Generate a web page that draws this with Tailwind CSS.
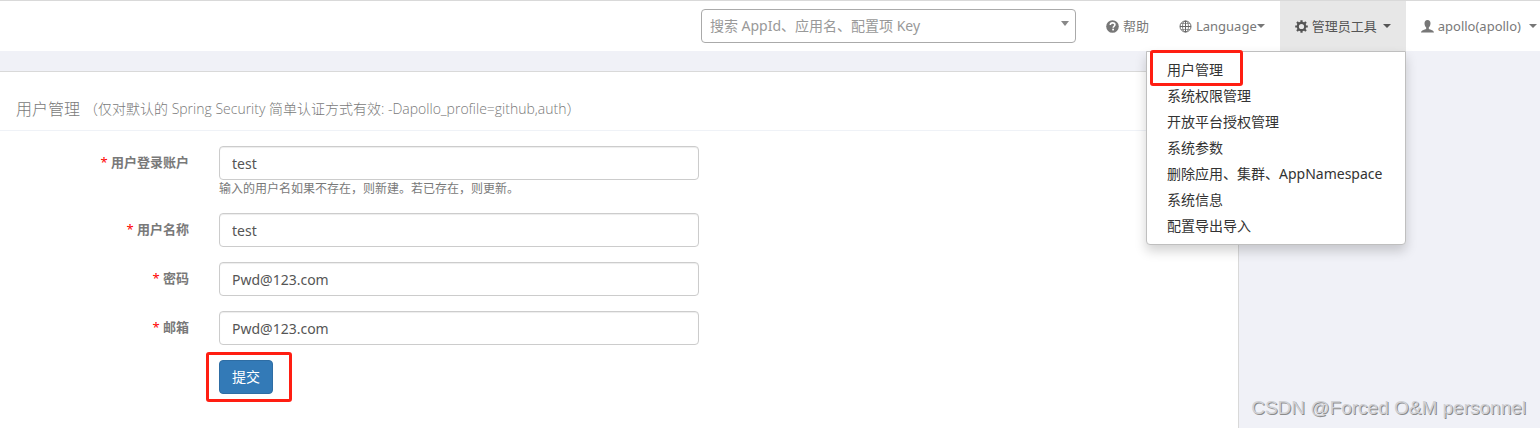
<!DOCTYPE html>
<html lang="zh-CN">
  <head>
    <meta charset="UTF-8" />
    <meta name="viewport" content="width=device-width, initial-scale=1.0" />
    <title>用户管理</title>
    <script src="https://cdn.jsdelivr.net/npm/@tailwindcss/browser@4"></script>
  </head>
  <body
    class="relative flex flex-col min-h-screen overflow-x-hidden bg-[#f0f1f7] text-[#797979] text-sm font-['Noto_Sans','Noto_Sans_CJK_SC',sans-serif]"
  >
    <!-- Navbar -->
    <header
      class="flex justify-end h-[51px] shrink-0 bg-white border-t border-[#d9d9d9] text-[13px] whitespace-nowrap"
    >
      <div class="relative w-[375px] my-2 mr-[15px]">
        <select
          aria-label="搜索"
          class="appearance-none w-full h-[34px] px-2 rounded border border-[#aaa] bg-white text-sm text-[#999]"
        >
          <option>搜索 AppId、应用名、配置项 Key</option>
        </select>
        <span
          class="absolute right-[7px] top-3 border-x-4 border-t-5 border-x-transparent border-t-[#888] pointer-events-none"
        ></span>
      </div>
      <nav class="flex">
        <a href="#" class="flex items-center gap-1 px-[15px]">
          <svg class="size-[13px]" viewBox="0 0 13 13">
            <circle cx="6.5" cy="6.5" r="6.3" fill="#777" />
            <path
              d="M4.3 5.1c0-1.5 1-2.2 2.3-2.2s2.3.7 2.3 1.9c0 1.4-1.7 1.5-1.7 2.9"
              fill="none"
              stroke="#fff"
              stroke-width="1.6"
            />
            <rect x="6.2" y="8.7" width="1.8" height="1.7" fill="#fff" />
          </svg>
          帮助
        </a>
        <a href="#" class="flex items-center px-[15px]">
          <svg
            class="size-[13px] mr-1"
            viewBox="0 0 13 13"
            fill="none"
            stroke="#666"
          >
            <circle cx="6.5" cy="6.5" r="5.5" />
            <ellipse cx="6.5" cy="6.5" rx="3" ry="5.5" stroke-width=".8" />
            <path d="M6.5 1v11M1 6.500h11" />
            <path d="M2.200 3.500h8.600M2.200 9.500h8.600" stroke-width=".6" />
          </svg>
          Language
          <span
            class="border-x-4 border-t-4 border-x-transparent border-t-[#777]"
          ></span>
        </a>
        <a href="#" class="flex items-center px-[15px] bg-[#e7e7e7] text-[#555]">
          <svg
            class="size-[13px] mr-1"
            viewBox="0 0 13 13"
            fill="none"
            stroke="#555"
          >
            <circle cx="6.5" cy="6.5" r="3.7" stroke-width="2.2" />
            <path
              d="M6.5 .2v2.300M6.500 10.500v2.300M.2 6.500h2.300M10.500 6.500h2.300M2 2l1.700 1.700M9.300 9.300l1.700 1.700M2 11l1.700-1.700M9.300 3.700l1.700-1.700"
              stroke-width="2.2"
            />
          </svg>
          管理员工具
          <span
            class="ml-[6px] border-x-4 border-t-4 border-x-transparent border-t-[#555]"
          ></span>
        </a>
        <a href="#" class="flex items-center pl-[15px] pr-[3px]">
          <svg class="size-[13px] mr-1" viewBox="0 0 13 13" fill="#777">
            <path
              d="M6.5 0c-2 0-3 1.400-3 3.300 0 1.800.7 3.300 1.700 4.300v1.100C3.800 9.800 0 10.100 0 12.600h13c0-2.500-3.800-2.800-5.200-3.900V7.600c1-1 1.700-2.500 1.700-4.300 0-1.900-1-3.300-3-3.300z"
            />
          </svg>
          apollo(apollo)
          <span
            class="ml-2 border-x-4 border-t-4 border-x-transparent border-t-[#777]"
          ></span>
        </a>
      </nav>
    </header>

    <!-- Admin dropdown -->
    <ul
      class="absolute z-10 right-[134px] top-[51px] w-[260px] py-[5px] bg-white border border-[#bfbfbf] rounded-b text-[#333] leading-[26px] shadow-[0_6px_12px_rgba(0,0,0,0.18)]"
    >
      <li class="relative px-5">
        <a href="#">用户管理</a>
        <span
          class="absolute left-[3px] -top-[7px] w-[93px] h-9 border-3 border-[#ff1e12] rounded-[3px] pointer-events-none"
        ></span>
      </li>
      <li class="px-5"><a href="#">系统权限管理</a></li>
      <li class="px-5"><a href="#">开放平台授权管理</a></li>
      <li class="px-5"><a href="#">系统参数</a></li>
      <li class="px-5 whitespace-nowrap">
        <a href="#">删除应用、集群、AppNamespace</a>
      </li>
      <li class="px-5"><a href="#">系统信息</a></li>
      <li class="px-5"><a href="#">配置导出导入</a></li>
    </ul>

    <!-- User panel -->
    <main
      class="grow w-[80.45%] mt-5 bg-white border-t border-r border-[#d9d9d9]"
    >
      <h1
        class="flex items-center h-[59px] pt-4 pl-4 border-b border-[#eff2f7] text-base font-light font-['Open_Sans','Noto_Sans_CJK_SC',sans-serif]"
      >
        用户管理
        <small class="ml-1 text-sm">
          （仅对默认的 Spring Security 简单认证方式有效:
          -Dapollo_profile=github,auth）
        </small>
      </h1>
      <form class="flex flex-col gap-[15px] pt-[15px] mr-[14px]">
        <div class="flex">
          <label
            for="username"
            class="w-1/6 pr-[15px] pt-[7px] text-right text-[13px] leading-[19px] font-bold"
            ><span class="text-[#f00] font-normal">*</span> 用户登录账户</label
          >
          <div class="w-5/12 px-[15px]">
            <input
              id="username"
              type="text"
              value="test"
              class="block w-full h-[34px] px-3 rounded border border-[#ccc] text-[#555] shadow-[inset_0_1px_1px_rgba(0,0,0,0.075)]"
            />
            <small class="block text-xs leading-[18px]"
              >输入的用户名如果不存在，则新建。若已存在，则更新。</small
            >
          </div>
        </div>
        <div class="flex">
          <label
            for="display-name"
            class="w-1/6 pr-[15px] pt-[7px] text-right text-[13px] leading-[19px] font-bold"
            ><span class="text-[#f00] font-normal">*</span> 用户名称</label
          >
          <div class="w-5/12 px-[15px]">
            <input
              id="display-name"
              type="text"
              value="test"
              class="block w-full h-[34px] px-3 rounded border border-[#ccc] text-[#555] shadow-[inset_0_1px_1px_rgba(0,0,0,0.075)]"
            />
          </div>
        </div>
        <div class="flex">
          <label
            for="password"
            class="w-1/6 pr-[15px] pt-[7px] text-right text-[13px] leading-[19px] font-bold"
            ><span class="text-[#f00] font-normal">*</span> 密码</label
          >
          <div class="w-5/12 px-[15px]">
            <input
              id="password"
              type="text"
              value="Pwd@123.com"
              class="block w-full h-[34px] px-3 rounded border border-[#ccc] text-[#555] shadow-[inset_0_1px_1px_rgba(0,0,0,0.075)]"
            />
          </div>
        </div>
        <div class="flex">
          <label
            for="email"
            class="w-1/6 pr-[15px] pt-[7px] text-right text-[13px] leading-[19px] font-bold"
            ><span class="text-[#f00] font-normal">*</span> 邮箱</label
          >
          <div class="w-5/12 px-[15px]">
            <input
              id="email"
              type="text"
              value="Pwd@123.com"
              class="block w-full h-[34px] px-3 rounded border border-[#ccc] text-[#555] shadow-[inset_0_1px_1px_rgba(0,0,0,0.075)]"
            />
          </div>
        </div>
        <div class="flex">
          <div class="w-1/6"></div>
          <div class="relative px-[15px]">
            <button
              type="submit"
              class="block h-[34px] px-3 rounded border border-[#2e6da4] bg-[#337ab7] text-white"
            >
              提交
            </button>
            <span
              class="absolute left-0.5 -top-2 w-[86px] h-[50px] border-3 border-[#ff1e12] rounded-[3px] pointer-events-none"
            ></span>
          </div>
        </div>
      </form>
    </main>

    <p
      class="absolute right-[14px] bottom-1.5 text-[19px] leading-7 text-[#d0d1d5] font-['Liberation_Sans',sans-serif] [text-shadow:1px_1px_0_#8c8c8c]"
    >
      CSDN @Forced O&amp;M personnel
    </p>
  </body>
</html>
